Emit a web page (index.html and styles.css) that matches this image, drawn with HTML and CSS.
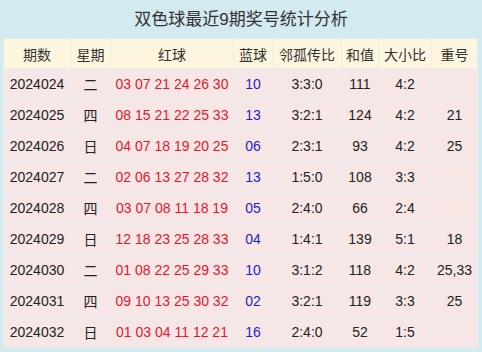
FILE: index.html
```
<!DOCTYPE html>
<html lang="zh">
<head>
<meta charset="utf-8">
<link rel="stylesheet" href="styles.css">
</head>
<body>
<div class="panel">
  <div class="title">双色球最近9期奖号统计分析</div>
  <table class="stats">
    <colgroup>
      <col class="c-issue"><col class="c-week"><col class="c-red"><col class="c-blue"><col class="c-ratio"><col class="c-sum"><col class="c-size"><col class="c-repeat">
    </colgroup>
    <thead>
      <tr><th>期数</th><th>星期</th><th>红球</th><th>蓝球</th><th>邻孤传比</th><th>和值</th><th>大小比</th><th>重号</th></tr>
    </thead>
    <tbody>
      <tr><td>2024024</td><td>二</td><td class="red">03 07 21 24 26 30</td><td class="blue">10</td><td>3:3:0</td><td>111</td><td>4:2</td><td></td></tr>
      <tr><td>2024025</td><td>四</td><td class="red">08 15 21 22 25 33</td><td class="blue">13</td><td>3:2:1</td><td>124</td><td>4:2</td><td>21</td></tr>
      <tr><td>2024026</td><td>日</td><td class="red">04 07 18 19 20 25</td><td class="blue">06</td><td>2:3:1</td><td>93</td><td>4:2</td><td>25</td></tr>
      <tr><td>2024027</td><td>二</td><td class="red">02 06 13 27 28 32</td><td class="blue">13</td><td>1:5:0</td><td>108</td><td>3:3</td><td></td></tr>
      <tr><td>2024028</td><td>四</td><td class="red">03 07 08 11 18 19</td><td class="blue">05</td><td>2:4:0</td><td>66</td><td>2:4</td><td></td></tr>
      <tr><td>2024029</td><td>日</td><td class="red">12 18 23 25 28 33</td><td class="blue">04</td><td>1:4:1</td><td>139</td><td>5:1</td><td>18</td></tr>
      <tr><td>2024030</td><td>二</td><td class="red">01 08 22 25 29 33</td><td class="blue">10</td><td>3:1:2</td><td>118</td><td>4:2</td><td>25,33</td></tr>
      <tr><td>2024031</td><td>四</td><td class="red">09 10 13 25 30 32</td><td class="blue">02</td><td>3:2:1</td><td>119</td><td>3:3</td><td>25</td></tr>
      <tr><td>2024032</td><td>日</td><td class="red">01 03 04 11 12 21</td><td class="blue">16</td><td>2:4:0</td><td>52</td><td>1:5</td><td></td></tr>
    </tbody>
  </table>
</div>
</body>
</html>
```
FILE: styles.css
```
* { box-sizing: border-box; }
html, body { margin: 0; padding: 0; }
body {
  font-family: "Liberation Sans", "Noto Sans CJK SC", Arial, sans-serif;
  color: #222;
}
.panel {
  width: 482px;
  height: 352px;
  background: #d3eaf1;
  padding: 0 3px 0 3px;
  overflow: hidden;
}
.title {
  height: 38px;
  line-height: 40px;
  text-align: center;
  font-size: 17px;
  color: #333;
}
.stats {
  table-layout: fixed;
  width: 475px;
  border-collapse: separate;
  border-spacing: 1px;
  background: #e4eef1;
  font-size: 14px;
}
.c-issue { width: 66px; }
.c-week { width: 39px; }
.c-red { width: 122px; }
.c-blue { width: 38px; }
.c-ratio { width: 68px; }
.c-sum { width: 36px; }
.c-size { width: 52px; }
.c-repeat { width: 45px; }
.stats th {
  height: 29px;
  padding: 0;
  font-weight: normal;
  background: #fdf5de;
  color: #333;
  text-align: center;
  white-space: nowrap;
}
.stats td {
  height: 30px;
  padding: 0;
  background: #f6e6e6;
  text-align: center;
  white-space: nowrap;
  color: #222;
}
.stats td.red { color: #e3162d; }
.stats td.blue { color: #1d1dc8; }
```
